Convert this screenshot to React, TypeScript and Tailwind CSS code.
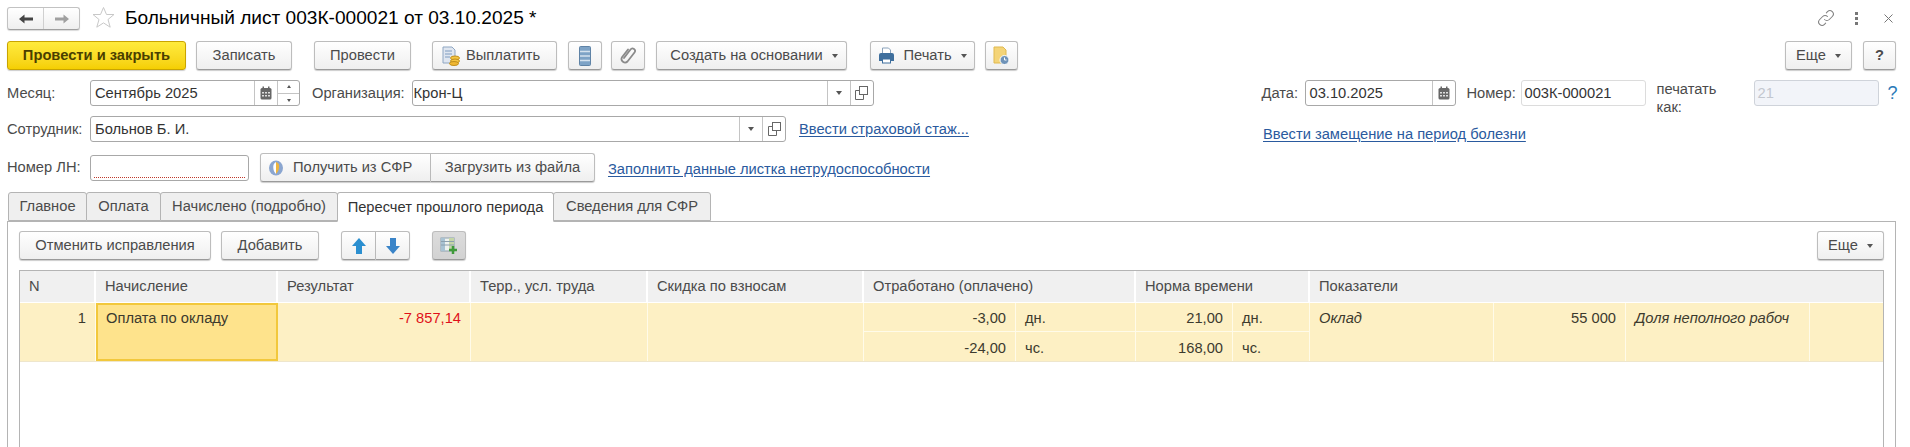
import { ReactNode } from "react";

function Caret() {
  return <span className="ml-[9px] w-0 h-0 border-x-[3px] border-x-transparent border-t-[4px] border-t-[#555]" />;
}

function Btn({ className, children }: { className: string; children: ReactNode }) {
  return (
    <div className={`h-[29px] flex items-center justify-center shrink-0 whitespace-nowrap rounded-[3px] border border-[#bdbdbd] border-b-[#9a9a9a] bg-gradient-to-b from-white to-[#efefef] shadow-[0_1px_1px_rgba(0,0,0,0.2)] text-[#4b4b4b] ${className}`}>
      {children}
    </div>
  );
}

function Calendar() {
  return (
    <svg width="12" height="14" viewBox="0 0 12 14">
      <rect x="0.5" y="2" width="11" height="11.5" rx="1.5" fill="#666" />
      <rect x="2.5" y="0.5" width="1.5" height="3" fill="#666" />
      <rect x="8" y="0.5" width="1.5" height="3" fill="#666" />
      <g fill="#ddd">
        <rect x="2" y="6" width="2" height="1.5" /><rect x="5" y="6" width="2" height="1.5" /><rect x="8" y="6" width="2" height="1.5" />
        <rect x="2" y="9" width="2" height="1.5" /><rect x="5" y="9" width="2" height="1.5" /><rect x="8" y="9" width="2" height="1.5" />
      </g>
    </svg>
  );
}

function OpenIcon() {
  return (
    <svg width="13" height="14" viewBox="0 0 13 14" fill="none" stroke="#666">
      <rect x="4.5" y="0.5" width="8" height="8" fill="#fff" />
      <path d="M4.5 4.5h-4v9h8v-5" />
    </svg>
  );
}

function FieldSide({ className, children }: { className: string; children: ReactNode }) {
  return <div className={`h-full flex items-center justify-center border-l border-[#c4c4c4] shrink-0 ${className}`}>{children}</div>;
}

function DownCaret() {
  return <span className="w-0 h-0 border-x-[3px] border-x-transparent border-t-[4px] border-t-[#555]" />;
}

function Link2({ className, children }: { className: string; children: ReactNode }) {
  return <span className={`text-[#2a5a9e] underline underline-offset-2 shrink-0 whitespace-nowrap ${className}`}>{children}</span>;
}

function Tab({ className, active, children }: { className: string; active?: boolean; children: ReactNode }) {
  return (
    <div className={`flex items-center justify-center shrink-0 border border-[#b4b4b4] rounded-t-[3px] -mr-px ${active ? "h-[30px] -mb-px border-b-white bg-white text-[#333]" : "h-[29px] bg-[#efefef] text-[#4b4b4b]"} ${className}`}>
      {children}
    </div>
  );
}

function HeadCell({ className, children }: { className: string; children: ReactNode }) {
  return <div className={`h-full flex items-center pl-[9px] border-r-2 border-white shrink-0 text-[#4b4b4b] ${className}`}>{children}</div>;
}

export default function App() {
  return (
    <div className="w-[1910px] h-[447px] overflow-hidden bg-white text-[14.7px] text-[#4b4b4b] font-['Liberation_Sans',Arial,sans-serif]">
      {/* Title */}
      <div className="h-[37px] pt-[7px] pl-[7px] flex items-start">
        <div className="w-[73px] h-[23px] flex rounded-[3px] border border-[#c2c2c2] border-b-[#a0a0a0] bg-gradient-to-b from-white to-[#efefef] shadow-[0_1px_1px_rgba(0,0,0,0.15)]">
          <div className="w-[36px] h-full flex items-center justify-center border-r border-[#d0d0d0]">
            <svg width="14" height="10" viewBox="0 0 14 10" fill="#444"><path d="M0 5l5.500-4.500v3H14v3H5.500v3z" /></svg>
          </div>
          <div className="flex-1 flex items-center justify-center">
            <svg width="14" height="10" viewBox="0 0 14 10" fill="#a0a0a0"><path d="M14 5L8.500 0.500v3H0v3h8.500v3z" /></svg>
          </div>
        </div>
        <svg className="ml-[12px] mt-[-1px]" width="23" height="23" viewBox="0 0 23 23" fill="#fff" stroke="#c8c8c8">
          <path d="M11.5 1.5l3 7h7.5l-6 5 2.2 7.7-6.700-4.300-6.700 4.300 2.200-7.700-6-5h7.500z" />
        </svg>
        <div className="ml-[10px] text-[19.1px] leading-[22px] text-black">Больничный лист 003К-000021 от 03.10.2025 *</div>
        <div className="ml-auto flex items-center h-[22px] pr-[17px]">
          <svg width="18" height="18" viewBox="0 0 24 24" fill="none" stroke="#808080" strokeWidth="1.4" strokeLinecap="round">
            <path d="M10 14a4.500 4.500 0 0 0 6.400 0l4-4a4.500 4.500 0 0 0-6.400-6.400l-1.500 1.500" />
            <path d="M14 10a4.500 4.500 0 0 0-6.400 0l-4 4a4.500 4.500 0 0 0 6.400 6.400l1.500-1.500" />
          </svg>
          <div className="ml-[20px] flex flex-col gap-[2px]">
            <span className="w-[3px] h-[3px] bg-[#777]" />
            <span className="w-[3px] h-[3px] bg-[#777]" />
            <span className="w-[3px] h-[3px] bg-[#777]" />
          </div>
          <svg className="ml-[26px]" width="9" height="9" viewBox="0 0 9 9" stroke="#777" strokeWidth="1"><path d="M0.500 0.500l8 8M8.500 0.500l-8 8" /></svg>
        </div>
      </div>

      {/* Command bar */}
      <div className="h-[29px] mt-[4px] pl-[7px] pr-[14px] flex items-center">
        <Btn className="w-[179px] !border-[#c9a400] !from-[#ffeb3b] !to-[#f5cf00] font-bold !text-[#4a3f00]">Провести и закрыть</Btn>
        <Btn className="ml-[10px] w-[96px]">Записать</Btn>
        <Btn className="ml-[22px] w-[97px]">Провести</Btn>
        <Btn className="ml-[21px] w-[125px] !justify-start pl-[8px]">
          <svg className="mr-[5px]" width="20" height="20" viewBox="0 0 20 20">
            <path d="M2 1h9l3 3v13H2z" fill="#dfe6f0" stroke="#8fa6c2" />
            <path d="M4 5h7M4 8h7M4 11h5" stroke="#7f9cc0" />
            <ellipse cx="14" cy="12" rx="4.500" ry="2" fill="#f5c542" stroke="#c08f1c" />
            <ellipse cx="14" cy="15" rx="4.500" ry="2" fill="#f5c542" stroke="#c08f1c" />
            <ellipse cx="13" cy="17.500" rx="4.500" ry="2" fill="#f0b732" stroke="#c08f1c" />
          </svg>
          Выплатить
        </Btn>
        <Btn className="ml-[11px] w-[34px]">
          <svg width="12" height="20" viewBox="0 0 12 20">
            <rect x="0.500" y="0.500" width="11" height="19" rx="1" fill="#7ea3c6" stroke="#5f83a6" />
            <path d="M1 5.500h10M1 10h10M1 14.500h10" stroke="#d5e2ee" strokeWidth="1.500" />
          </svg>
        </Btn>
        <Btn className="ml-[9px] w-[34px]">
          <svg width="17" height="19" viewBox="0 0 17 19" fill="none" stroke="#8a8a8a" strokeWidth="1.800" strokeLinecap="round">
            <path d="M4 12l6.500-8.500a2.500 2.500 0 0 1 4 3L7.500 15.500a3.500 3.500 0 0 1-5.500-4.200L8 3.500" />
          </svg>
        </Btn>
        <Btn className="ml-[11px] w-[191px] pl-[5px]">Создать на основании<Caret /></Btn>
        <Btn className="ml-[23px] w-[105px]">
          <svg className="mr-[8px]" width="17" height="17" viewBox="0 0 17 17">
            <path d="M4.500 1h6l2 2v4h-8z" fill="#fff" stroke="#8aa2bb" />
            <path d="M1 8a2 2 0 0 1 2-2h11a2 2 0 0 1 2 2v6h-3v-2H4v2H1z" fill="#3f6f9d" />
            <rect x="4.500" y="12" width="8" height="4" fill="#fff" stroke="#3f6f9d" />
          </svg>
          Печать<Caret />
        </Btn>
        <Btn className="ml-[10px] w-[33px]">
          <svg width="17" height="20" viewBox="0 0 17 20">
            <path d="M1 1h9l3 3v13H1z" fill="#f4d478" stroke="#e0b94f" />
            <circle cx="11.500" cy="14" r="4.500" fill="#6f93b8" stroke="#fff" />
            <path d="M11.500 11.500V14h2" stroke="#fff" fill="none" />
          </svg>
        </Btn>
        <Btn className="ml-auto w-[67px]">Еще<Caret /></Btn>
        <Btn className="ml-[11px] w-[33px] font-bold">?</Btn>
      </div>

      {/* Fields */}
      <div className="h-[26px] mt-[10px] pl-[7px] flex items-center">
        <span className="w-[83px] shrink-0">Месяц:</span>
        <div className="w-[210px] h-full shrink-0 flex items-center border border-[#a8a8a8] rounded-[3px] pl-[4px] text-[#333]">
          <span className="flex-1">Сентябрь 2025</span>
          <FieldSide className="w-[23px]"><Calendar /></FieldSide>
          <FieldSide className="w-[22px] flex-col gap-[5px]">
            <span className="w-0 h-0 border-x-[2px] border-x-transparent border-b-[3px] border-b-[#555]" />
            <span className="w-full h-px bg-[#c4c4c4]" />
            <span className="w-0 h-0 border-x-[2px] border-x-transparent border-t-[3px] border-t-[#555]" />
          </FieldSide>
        </div>
        <span className="ml-[12px] w-[99.500px] shrink-0">Организация:</span>
        <div className="w-[462px] h-full shrink-0 flex items-center border border-[#a8a8a8] rounded-[3px] pl-[1px] text-[#333]">
          <span className="flex-1">Крон-Ц</span>
          <FieldSide className="w-[23px]"><DownCaret /></FieldSide>
          <FieldSide className="w-[23px]"><OpenIcon /></FieldSide>
        </div>
        <span className="ml-[388px] w-[43px] shrink-0">Дата:</span>
        <div className="w-[151px] h-full shrink-0 flex items-center border border-[#a8a8a8] rounded-[3px] pl-[4px] text-[#333]">
          <span className="flex-1">03.10.2025</span>
          <FieldSide className="w-[23px]"><Calendar /></FieldSide>
        </div>
        <span className="ml-[11px] w-[54px] shrink-0">Номер:</span>
        <div className="w-[125px] h-full shrink-0 flex items-center border border-[#dcdcdc] rounded-[3px] pl-[3px] text-[#333]">003К-000021</div>
        <span className="ml-[11px] w-[97px] shrink-0 leading-[18px] self-start">печатать<br />как:</span>
        <div className="w-[125px] h-full shrink-0 flex items-center border border-[#cfd3da] rounded-[3px] pl-[3px] bg-[#f2f4f9] text-[#c3c7cf]">21</div>
        <span className="ml-[9px] text-[#2a7ab8] text-[18px]">?</span>
      </div>

      <div className="h-[26px] mt-[10px] pl-[7px] flex items-center">
        <span className="w-[83px] shrink-0">Сотрудник:</span>
        <div className="w-[696px] h-full shrink-0 flex items-center border border-[#a8a8a8] rounded-[3px] pl-[4px] text-[#333]">
          <span className="flex-1">Больнов Б. И.</span>
          <FieldSide className="w-[23px]"><DownCaret /></FieldSide>
          <FieldSide className="w-[23px]"><OpenIcon /></FieldSide>
        </div>
        <Link2 className="ml-[13px] w-[171px]">Ввести страховой стаж...</Link2>
        <Link2 className="ml-[293px] mt-[10px]">Ввести замещение на период болезни</Link2>
      </div>

      <div className="h-[29px] mt-[11px] pl-[7px] flex items-center">
        <span className="w-[83px] shrink-0">Номер ЛН:</span>
        <div className="w-[159px] h-[26px] shrink-0 border border-[#a8a8a8] rounded-[3px] flex items-end px-[3px] pb-[2px]">
          <span className="w-full border-b border-dotted border-[#c0392b]" />
        </div>
        <Btn className="ml-[11px] w-[171px] rounded-r-none !justify-start pl-[7px]">
          <svg className="mr-[9px]" width="16" height="16" viewBox="0 0 15 16">
            <ellipse cx="7.500" cy="8" rx="7" ry="7.500" fill="#8ba6d0" />
            <path d="M7.500 2c3 1 3.500 3 3 6s-1.500 4-3 6z" fill="#eeb53e" />
            <path d="M7.500 2c-2 1-3 3-2.700 6s1.200 4 2.700 6z" fill="#fff" />
          </svg>
          Получить из СФР
        </Btn>
        <Btn className="w-[164px] rounded-l-none border-l-0">Загрузить из файла</Btn>
        <Link2 className="ml-[13px] mt-[3px]">Заполнить данные листка нетрудоспособности</Link2>
      </div>

      {/* Tabs */}
      <div className="mt-[10px] pl-[8px] flex items-end h-[29px]">
        <Tab className="w-[79px]">Главное</Tab>
        <Tab className="w-[75px]">Оплата</Tab>
        <Tab className="w-[178px]">Начислено (подробно)</Tab>
        <Tab className="w-[217px]" active>Пересчет прошлого периода</Tab>
        <Tab className="w-[158px]">Сведения для СФР</Tab>
      </div>

      {/* Panel */}
      <div className="ml-[7px] w-[1889px] h-[226px] border border-[#b4b4b4] border-b-0 px-[11px] pt-[9px]">
        <div className="h-[29px] flex items-center">
          <Btn className="w-[192px]">Отменить исправления</Btn>
          <Btn className="ml-[10px] w-[98px]">Добавить</Btn>
          <Btn className="ml-[22px] w-[35px] rounded-r-none">
            <svg width="14" height="16" viewBox="0 0 14 16" fill="#2b8fd0"><path d="M7 0l7 8H10v8H4V8H0z" /></svg>
          </Btn>
          <Btn className="w-[34px] rounded-l-none border-l-0">
            <svg width="14" height="16" viewBox="0 0 14 16" fill="#3a84c8"><path d="M7 16l7-8H10V0H4v8H0z" /></svg>
          </Btn>
          <Btn className="ml-[22px] w-[34px] !from-[#dcdcdc] !to-[#d2d2d2]">
            <svg width="18" height="18" viewBox="0 0 18 18">
              <rect x="1" y="1" width="13" height="13" fill="#eef1ee" stroke="#8ca0ad" />
              <rect x="1" y="1" width="4" height="13" fill="#a9c3d3" />
              <rect x="9" y="1" width="5" height="13" fill="#c5d6a8" />
              <path d="M1 4.500h13M1 8h13" stroke="#8ca0ad" />
              <path d="M13 9v8M9 13h8" stroke="#3f9a3a" strokeWidth="2.500" />
            </svg>
          </Btn>
          <Btn className="ml-auto w-[67px]">Еще<Caret /></Btn>
        </div>

        {/* Table */}
        <div className="mt-[10px] w-[1865px] h-[178px] border border-[#b4b4b4] border-b-0">
          <div className="h-[31px] flex bg-[#f0f0f0]">
            <HeadCell className="w-[76px]">N</HeadCell>
            <HeadCell className="w-[182px]">Начисление</HeadCell>
            <HeadCell className="w-[193px]">Результат</HeadCell>
            <HeadCell className="w-[177px]">Терр., усл. труда</HeadCell>
            <HeadCell className="w-[216px]">Скидка по взносам</HeadCell>
            <HeadCell className="w-[272px]">Отработано (оплачено)</HeadCell>
            <HeadCell className="w-[174px]">Норма времени</HeadCell>
            <div className="flex-1 h-full flex items-center pl-[9px]">Показатели</div>
          </div>
          <div className="mt-[1px] h-[59px] flex bg-[#fdf0c4] border-b border-[#eee6cc] text-[#3c3a2e]">
            <div className="w-[76px] shrink-0 border-r border-[#fffbe9] pr-[9px] pt-[4px] text-right">1</div>
            <div className="w-[182px] shrink-0 border-2 border-[#f2c83c] bg-[#fee38c] pl-[8px] pt-[2px]">Оплата по окладу</div>
            <div className="w-[193px] shrink-0 border-r border-[#fffbe9] pr-[9px] pt-[4px] text-right text-[#e0101a]">-7 857,14</div>
            <div className="w-[177px] shrink-0 border-r border-[#fffbe9]" />
            <div className="w-[216px] shrink-0 border-r border-[#fffbe9]" />
            <div className="w-[272px] shrink-0 border-r border-[#fffbe9] flex flex-col">
              <div className="h-[29px] flex border-b border-[#fffbe9]">
                <span className="w-[152px] pr-[9px] pt-[4px] text-right border-r border-[#fffbe9]">-3,00</span>
                <span className="pl-[9px] pt-[4px]">дн.</span>
              </div>
              <div className="flex-1 flex">
                <span className="w-[152px] pr-[9px] pt-[5px] text-right border-r border-[#fffbe9]">-24,00</span>
                <span className="pl-[9px] pt-[5px]">чс.</span>
              </div>
            </div>
            <div className="w-[174px] shrink-0 border-r border-[#fffbe9] flex flex-col">
              <div className="h-[29px] flex border-b border-[#fffbe9]">
                <span className="w-[97px] pr-[9px] pt-[4px] text-right border-r border-[#fffbe9]">21,00</span>
                <span className="pl-[9px] pt-[4px]">дн.</span>
              </div>
              <div className="flex-1 flex">
                <span className="w-[97px] pr-[9px] pt-[5px] text-right border-r border-[#fffbe9]">168,00</span>
                <span className="pl-[9px] pt-[5px]">чс.</span>
              </div>
            </div>
            <div className="w-[184px] shrink-0 border-r border-[#fffbe9] pl-[9px] pt-[4px] italic">Оклад</div>
            <div className="w-[132px] shrink-0 border-r border-[#fffbe9] pr-[9px] pt-[4px] text-right">55 000</div>
            <div className="w-[184px] shrink-0 border-r border-[#fffbe9] pl-[9px] pt-[4px] italic whitespace-nowrap overflow-hidden">Доля неполного рабоч</div>
            <div className="flex-1" />
          </div>
        </div>
      </div>
    </div>
  );
}
